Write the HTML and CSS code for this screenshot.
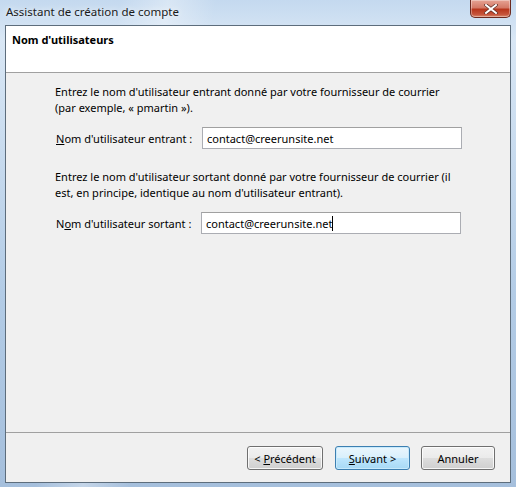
FILE: index.html
```html
<!DOCTYPE html>
<html lang="fr">
<head>
    <meta charset="UTF-8">
    <title>Assistant de création de compte</title>
    <link rel="stylesheet" href="styles.css">
</head>
<body>
    <div class="window">
        <div class="titlebar">
            <span class="title">Assistant de création de compte</span>
            <button class="close-btn" type="button" aria-label="Fermer">
                <svg width="14" height="10" viewBox="0 0 14 10">
                    <path d="M2 1 L12 9 M12 1 L2 9" stroke="#5a2a22" stroke-width="3.4" stroke-linecap="square"/>
                    <path d="M2 1 L12 9 M12 1 L2 9" stroke="#fff" stroke-width="2" stroke-linecap="square"/>
                </svg>
            </button>
        </div>

        <div class="client">
            <div class="banner">
                <h1>Nom d'utilisateurs</h1>
            </div>

            <div class="content">
                <p class="hint">Entrez le nom d'utilisateur entrant donné par votre fournisseur de courrier<br>(par exemple, « pmartin »).</p>
                <div class="field">
                    <label for="inUser"><u>N</u>om d'utilisateur entrant :</label>
                    <input type="text" id="inUser" value="contact@creerunsite.net">
                </div>

                <p class="hint">Entrez le nom d'utilisateur sortant donné par votre fournisseur de courrier (il<br>est, en principe, identique au nom d'utilisateur entrant).</p>
                <div class="field">
                    <label for="outUser">N<u>o</u>m d'utilisateur sortant :</label>
                    <div class="input-box">contact@creerunsite.net<span class="caret"></span></div>
                </div>
            </div>

            <div class="footer">
                <button type="button" class="btn">&lt; <u>P</u>récédent</button>
                <button type="button" class="btn btn-default"><u>S</u>uivant &gt;</button>
                <button type="button" class="btn btn-cancel">Annuler</button>
            </div>
        </div>
    </div>
</body>
</html>
```

FILE: styles.css
```css
body {
    margin: 0;
    font-family: 'Noto Sans', 'Open Sans', sans-serif;
    font-size: 11px;
    color: #000;
}

.window {
    width: 516px;
    height: 487px;
    display: flex;
    flex-direction: column;
    background:
        linear-gradient(100deg, rgba(255,255,255,0) 20%, rgba(255,255,255,0.35) 28%, rgba(255,255,255,0) 36%),
        linear-gradient(180deg, #c4d9ef 0%, #d9e7f5 8%, #b3cce6 60%, #a5bfdc 100%);
    box-sizing: border-box;
}

.titlebar {
    height: 25px;
    display: flex;
    align-items: flex-start;
    justify-content: space-between;
    padding-left: 6px;
}

.title {
    margin-top: 4px;
    font-size: 11.5px;
    color: #1a1a1a;
    text-shadow: 0 0 6px rgba(255,255,255,0.9);
}

.close-btn {
    width: 41px;
    height: 18px;
    margin: 0 5px 0 0;
    padding: 0;
    border: 1px solid #6b2a20;
    border-top: none;
    border-radius: 0 0 5px 5px;
    background: linear-gradient(180deg, #e6a394 0%, #d47966 45%, #b8361c 55%, #c6553c 85%, #d98a6e 100%);
    box-shadow: inset 0 0 0 1px rgba(255,255,255,0.35);
    display: flex;
    align-items: center;
    justify-content: center;
}

.client {
    flex: 1;
    margin: 0 5px 4px 5px;
    border: 1px solid #5d6d7c;
    background: #f0f0f0;
    display: flex;
    flex-direction: column;
}

.banner {
    height: 46px;
    background: #fff;
    border-bottom: 1px solid #a0a0a0;
}

.banner h1 {
    margin: 0;
    padding: 6px 0 0 6px;
    font-size: 11px;
    font-weight: bold;
}

.content {
    flex: 1;
    padding: 11px 40px 0 49px;
}

.hint {
    margin: 0 0 11px 0;
    line-height: 16px;
    white-space: nowrap;
}

.field {
    display: flex;
    align-items: center;
    margin-bottom: 20px;
    padding-left: 1px;
}

.field label {
    width: 146px;
    white-space: nowrap;
}

.field input,
.input-box {
    width: 260px;
    height: 22px;
    box-sizing: border-box;
    border: 1px solid #abadb3;
    border-top-color: #a0a0a0;
    background: #fff;
    padding: 0 4px;
    font-family: inherit;
    font-size: 11px;
    color: #000;
    outline: none;
}

.input-box {
    display: flex;
    align-items: center;
    margin-left: -1px;
}

.caret {
    display: inline-block;
    width: 1px;
    height: 15px;
    background: #000;
}

.footer {
    height: 50px;
    box-sizing: border-box;
    border-top: 1px solid #a0a0a0;
    display: flex;
    justify-content: flex-end;
    align-items: flex-start;
    padding: 13px 15px 0 0;
    gap: 12px;
}

.btn {
    width: 76px;
    height: 24px;
    border: 1px solid #707070;
    border-radius: 3px;
    background: linear-gradient(180deg, #f2f2f2 0%, #ebebeb 48%, #dddddd 52%, #cfcfcf 100%);
    box-shadow: inset 0 0 0 1px rgba(255,255,255,0.8);
    font-family: inherit;
    font-size: 11px;
    color: #000;
    padding: 0;
}

.btn-default {
    width: 75px;
    border-color: #3c7fb1;
    background: linear-gradient(180deg, #eaf6fd 0%, #d9f0fc 48%, #bee6fd 52%, #a7d9f5 100%);
    box-shadow: inset 0 0 0 1px #c8eafc;
}

.btn-cancel {
    width: 74px;
    margin-left: -1px;
}
```
